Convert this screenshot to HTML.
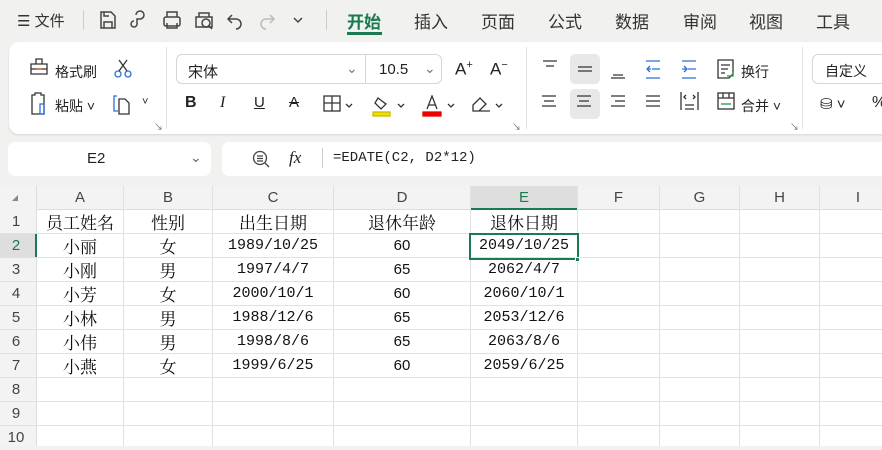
<!DOCTYPE html>
<html><head><meta charset="utf-8"><style>
*{margin:0;padding:0;box-sizing:border-box}
body{width:882px;height:446px;overflow:hidden;background:#f1f1ef;font-family:"Liberation Sans","Noto Sans CJK SC",sans-serif;color:#222;position:relative}
.a{position:absolute}
.tab{position:absolute;top:8px;font-size:17px;color:#333}
.ic{position:absolute}
.cell{position:absolute;height:24px;line-height:24px;text-align:center;font-size:15px;font-family:"Liberation Mono","Noto Serif CJK SC",monospace;color:#111}
.zh{font-family:"Noto Serif CJK SC",serif;font-size:17px}
.hd{position:absolute;text-align:center;font-size:15px;color:#444;line-height:24px}
.rb{position:absolute;font-size:14px;color:#222}
</style></head><body>
<div class="a" style="left:17px;top:10px;font-size:15px;color:#333">☰ 文件</div>
<div class="a" style="left:83px;top:10px;width:1px;height:20px;background:#ccc"></div>
<svg class="ic" style="left:98px;top:9px" width="210" height="22" viewBox="0 0 210 22" fill="none" stroke="#444" stroke-width="1.5">
<path d="M3 3h10l4 4v12H3z M6 19v-6h8v6 M6 3v4h5"/>
<path d="M38 6a4 4 0 1 1 4 4h-3v5a3 3 0 1 1-3-3"/>
<rect x="66" y="8" width="16" height="9" rx="2"/><path d="M69 8V3h10v5 M69 14v5h10v-5"/>
<path d="M98 8h16v10h-16z M101 8V4h10v4"/><circle cx="108" cy="14" r="4"/><path d="M111 17l3 3"/>
<path d="M134 6l-4 4 4 4 M130 10h8a5 5 0 0 1 0 10"/>
<path stroke="#bbb" d="M172 6l4 4-4 4 M176 10h-8a5 5 0 0 0 0 10"/>
<path d="M196 9l4 4 4-4"/>
</svg>
<div class="a" style="left:326px;top:10px;width:1px;height:20px;background:#ccc"></div>
<div class="tab" style="left:347px;color:#1a7a50;font-weight:bold">开始</div>
<div class="a" style="left:347px;top:32px;width:35px;height:3px;background:#1a7a50"></div>
<div class="tab" style="left:414px">插入</div>
<div class="tab" style="left:481px">页面</div>
<div class="tab" style="left:548px">公式</div>
<div class="tab" style="left:615px">数据</div>
<div class="tab" style="left:683px">审阅</div>
<div class="tab" style="left:749px">视图</div>
<div class="tab" style="left:816px">工具</div>
<div class="a" style="left:9px;top:42px;width:890px;height:92px;background:#fff;border-radius:10px;box-shadow:0 1px 2px rgba(0,0,0,.12)"></div>
<svg class="ic" style="left:28px;top:58px" width="130" height="60" viewBox="0 0 130 60" fill="none" stroke="#333" stroke-width="1.3">
<path d="M3 6h16v10H3z M8 6V1h6v5 M3 11h16" /><path stroke="#d9541e" d="M8 11h6"/>
<circle cx="90" cy="16" r="3" stroke="#2f6fd6"/><circle cx="100" cy="16" r="3" stroke="#2f6fd6"/><path d="M91 13l8-11 M99 13l-8-11"/>
<path d="M4 37h3v-2h6v2h3v19H4z"/><rect x="12" y="46" width="4" height="10" stroke="#2f6fd6"/>
<path stroke="#2f6fd6" d="M89 38h-3v15h4"/><path d="M91 41h6l4 4v11H91z"/>
</svg>
<div class="rb" style="left:55px;top:62px">格式刷</div>
<div class="rb" style="left:55px;top:96px">粘贴 ˅</div>
<div class="rb" style="left:142px;top:96px;font-size:11px">˅</div>
<div class="a" style="left:166px;top:47px;width:1px;height:82px;background:#e2e2e2"></div>
<div class="a" style="left:176px;top:54px;width:266px;height:30px;border:1px solid #d6d6d6;border-radius:6px"></div>
<div class="a" style="left:365px;top:55px;width:1px;height:28px;background:#d6d6d6"></div>
<div class="rb" style="left:188px;top:61px;font-size:15px">宋体</div>
<div class="rb" style="left:346px;top:60px;color:#777">⌄</div>
<div class="rb" style="left:379px;top:61px;font-size:15px">10.5</div>
<div class="rb" style="left:424px;top:60px;color:#777">⌄</div>
<div class="rb" style="left:455px;top:59px;font-size:17px">A<sup style="font-size:11px">+</sup></div>
<div class="rb" style="left:490px;top:59px;font-size:17px">A<sup style="font-size:11px">−</sup></div>
<div class="rb" style="left:185px;top:94px;font-size:16px;font-weight:bold">B</div>
<div class="rb" style="left:220px;top:94px;font-size:16px;font-style:italic;font-family:'Liberation Serif'">I</div>
<div class="rb" style="left:254px;top:94px;font-size:15px;text-decoration:underline">U</div>
<div class="rb" style="left:289px;top:94px;font-size:15px;text-decoration:line-through">A</div>
<svg class="ic" style="left:323px;top:95px" width="200" height="22" viewBox="0 0 200 22" fill="none" stroke="#333" stroke-width="1.3">
<rect x="1" y="1" width="16" height="15"/><path d="M9 1v15 M1 8h16"/><path d="M23 9l3 3 3-3"/>
<path d="M55 3l8 6-5 5-6-6z"/><rect x="50" y="17" width="17" height="4" fill="#f0e000" stroke="#c8bc00"/><path d="M75 9l3 3 3-3"/>
<path d="M104 14l5-13 5 13 M106 10h6"/><rect x="100" y="17" width="18" height="4" fill="#e00" stroke="#e00"/><path d="M125 9l3 3 3-3"/>
<path d="M150 10l7-7 6 6-7 7h-6z M153 16h14"/><path d="M173 9l3 3 3-3"/>
</svg>
<div class="a" style="left:526px;top:47px;width:1px;height:82px;background:#e2e2e2"></div>
<div class="a" style="left:570px;top:54px;width:30px;height:30px;background:#e8e8e8;border-radius:5px"></div>
<div class="a" style="left:570px;top:89px;width:30px;height:30px;background:#e8e8e8;border-radius:5px"></div>
<svg class="ic" style="left:538px;top:58px" width="230" height="60" viewBox="0 0 230 60" fill="none" stroke="#333" stroke-width="1.3">
<path d="M5 3h14 M8 8h8"/><path d="M40 9h14 M40 13h14"/><path d="M75 17h10 M73 20h14" />
<path stroke="#2f6fd6" d="M108 3h14 M114 11h8 M108 20h14 M112 8l-3 3 3 3 M109 11h4"/>
<path stroke="#2f6fd6" d="M144 3h14 M150 11h8 M144 20h14 M146 8l3 3-3 3 M144 11h4"/>
<path d="M180 2h15v14l-4 4h-11z M183 7h9 M183 11h7 M183 15h4"/><path stroke="#1a9a50" d="M189 18h6v-4"/>
<path d="M4 38h14 M6 43h10 M4 48h14"/><path d="M39 38h14 M41 43h10 M39 48h14"/><path d="M73 38h14 M77 43h10 M73 48h14"/>
<path d="M108 38h14 M108 43h14 M108 48h14"/><path d="M143 34v18 M160 34v18 M147 47h9 M147 51h9 M148 37l-2 2 2 2 M155 37l2 2-2 2"/>
<rect x="180" y="35" width="16" height="16"/><path d="M180 40h16 M185 35v5 M191 35v5"/><path stroke="#1a9a50" d="M183 46h10"/>
</svg>
<div class="rb" style="left:741px;top:62px">换行</div>
<div class="rb" style="left:741px;top:96px">合并 ˅</div>
<div class="a" style="left:802px;top:47px;width:1px;height:82px;background:#e2e2e2"></div>
<div class="a" style="left:812px;top:54px;width:90px;height:30px;border:1px solid #d6d6d6;border-radius:6px"></div>
<div class="rb" style="left:825px;top:61px">自定义</div>
<div class="rb" style="left:820px;top:95px;font-size:15px">⛁ ˅</div>
<div class="rb" style="left:872px;top:94px;font-size:16px">%</div>
<div class="rb" style="left:154px;top:120px;font-size:9px;color:#666">↘</div>
<div class="rb" style="left:512px;top:120px;font-size:9px;color:#666">↘</div>
<div class="rb" style="left:790px;top:120px;font-size:9px;color:#666">↘</div>
<div class="a" style="left:8px;top:142px;width:203px;height:34px;background:#fff;border-radius:7px"></div>
<div class="a" style="left:87px;top:150px;font-size:15px">E2</div>
<div class="a" style="left:190px;top:149px;font-size:14px;color:#666">⌄</div>
<div class="a" style="left:222px;top:142px;width:670px;height:34px;background:#fff;border-radius:7px"></div>
<svg class="ic" style="left:252px;top:150px" width="20" height="20" viewBox="0 0 20 20" fill="none" stroke="#444" stroke-width="1.3"><circle cx="8" cy="8" r="6.5"/><path d="M13 13l4 4 M5 6h6 M5 8.5h6 M5 11h6"/></svg>
<div class="a" style="left:289px;top:148px;font-size:17px;font-style:italic;font-family:'Liberation Serif',serif">fx</div>
<div class="a" style="left:322px;top:148px;width:1px;height:20px;background:#ccc"></div>
<div class="a" style="left:333px;top:150px;font-size:14px;font-family:'Liberation Mono',monospace">=EDATE(C2, D2*12)</div>
<div class="a" style="left:0;top:186px;width:882px;height:260px;background:#fff"></div>
<div class="a" style="left:0;top:186px;width:882px;height:24px;background:#f3f3f3;border-bottom:1px solid #ddd"></div>
<div class="a" style="left:0;top:186px;width:37px;height:260px;background:#f3f3f3;border-right:1px solid #ddd"></div>
<div class="a" style="left:470px;top:186px;width:108px;height:24px;background:#dedede;border-bottom:2px solid #1a7a50"></div>
<div class="a" style="left:0;top:234px;width:37px;height:24px;background:#dedede;border-right:2px solid #1a7a50"></div>
<div class="a" style="left:12px;top:195px;width:0;height:0;border-left:6px solid transparent;border-bottom:6px solid #888"></div>
<svg class="a" style="left:0;top:186px" width="882" height="260">
<g stroke="#e1e1e1" stroke-width="1">
<path d="M123.5 0v260 M212.5 0v260 M333.5 0v260 M470.5 0v260 M577.5 0v260 M659.5 0v260 M739.5 0v260 M819.5 0v260"/>
<path d="M0 47.5h882 M0 71.5h882 M0 95.5h882 M0 119.5h882 M0 143.5h882 M0 167.5h882 M0 191.5h882 M0 215.5h882 M0 239.5h882"/>
</g></svg>
<div class="hd" style="left:37px;top:186px;width:86px">A</div>
<div class="hd" style="left:124px;top:186px;width:88px">B</div>
<div class="hd" style="left:213px;top:186px;width:120px">C</div>
<div class="hd" style="left:334px;top:186px;width:136px">D</div>
<div class="hd" style="left:471px;top:186px;width:106px;color:#1a7a50">E</div>
<div class="hd" style="left:578px;top:186px;width:81px">F</div>
<div class="hd" style="left:660px;top:186px;width:79px">G</div>
<div class="hd" style="left:740px;top:186px;width:79px">H</div>
<div class="hd" style="left:820px;top:186px;width:76px">I</div>
<div class="hd" style="left:0;top:210px;width:32px">1</div>
<div class="hd" style="left:0;top:234px;width:32px;color:#1a7a50">2</div>
<div class="hd" style="left:0;top:258px;width:32px">3</div>
<div class="hd" style="left:0;top:282px;width:32px">4</div>
<div class="hd" style="left:0;top:306px;width:32px">5</div>
<div class="hd" style="left:0;top:330px;width:32px">6</div>
<div class="hd" style="left:0;top:354px;width:32px">7</div>
<div class="hd" style="left:0;top:378px;width:32px">8</div>
<div class="hd" style="left:0;top:402px;width:32px">9</div>
<div class="hd" style="left:0;top:426px;width:32px">10</div>
<div style="position:absolute;left:0;top:210px">
<div class="cell zh" style="left:37px;width:86px">员工姓名</div><div class="cell zh" style="left:124px;width:88px">性别</div><div class="cell zh" style="left:213px;width:120px">出生日期</div><div class="cell zh" style="left:334px;width:136px">退休年龄</div><div class="cell zh" style="left:471px;width:106px">退休日期</div>
</div>
<div style="position:absolute;left:0;top:234px">
<div class="cell zh" style="left:37px;width:86px">小丽</div><div class="cell zh" style="left:124px;width:88px">女</div><div class="cell" style="left:213px;width:120px">1989/10/25</div><div class="cell" style="left:334px;width:136px;font-family:'Liberation Sans'">60</div><div class="cell" style="left:471px;width:106px">2049/10/25</div></div>
<div style="position:absolute;left:0;top:258px">
<div class="cell zh" style="left:37px;width:86px">小刚</div><div class="cell zh" style="left:124px;width:88px">男</div><div class="cell" style="left:213px;width:120px">1997/4/7</div><div class="cell" style="left:334px;width:136px;font-family:'Liberation Sans'">65</div><div class="cell" style="left:471px;width:106px">2062/4/7</div></div>
<div style="position:absolute;left:0;top:282px">
<div class="cell zh" style="left:37px;width:86px">小芳</div><div class="cell zh" style="left:124px;width:88px">女</div><div class="cell" style="left:213px;width:120px">2000/10/1</div><div class="cell" style="left:334px;width:136px;font-family:'Liberation Sans'">60</div><div class="cell" style="left:471px;width:106px">2060/10/1</div></div>
<div style="position:absolute;left:0;top:306px">
<div class="cell zh" style="left:37px;width:86px">小林</div><div class="cell zh" style="left:124px;width:88px">男</div><div class="cell" style="left:213px;width:120px">1988/12/6</div><div class="cell" style="left:334px;width:136px;font-family:'Liberation Sans'">65</div><div class="cell" style="left:471px;width:106px">2053/12/6</div></div>
<div style="position:absolute;left:0;top:330px">
<div class="cell zh" style="left:37px;width:86px">小伟</div><div class="cell zh" style="left:124px;width:88px">男</div><div class="cell" style="left:213px;width:120px">1998/8/6</div><div class="cell" style="left:334px;width:136px;font-family:'Liberation Sans'">65</div><div class="cell" style="left:471px;width:106px">2063/8/6</div></div>
<div style="position:absolute;left:0;top:354px">
<div class="cell zh" style="left:37px;width:86px">小燕</div><div class="cell zh" style="left:124px;width:88px">女</div><div class="cell" style="left:213px;width:120px">1999/6/25</div><div class="cell" style="left:334px;width:136px;font-family:'Liberation Sans'">60</div><div class="cell" style="left:471px;width:106px">2059/6/25</div></div>
<div class="a" style="left:469px;top:233px;width:110px;height:27px;border:2px solid #1a7a50"></div>
<div class="a" style="left:575px;top:257px;width:5px;height:5px;background:#1a7a50;border:1px solid #fff"></div>
</body></html>
